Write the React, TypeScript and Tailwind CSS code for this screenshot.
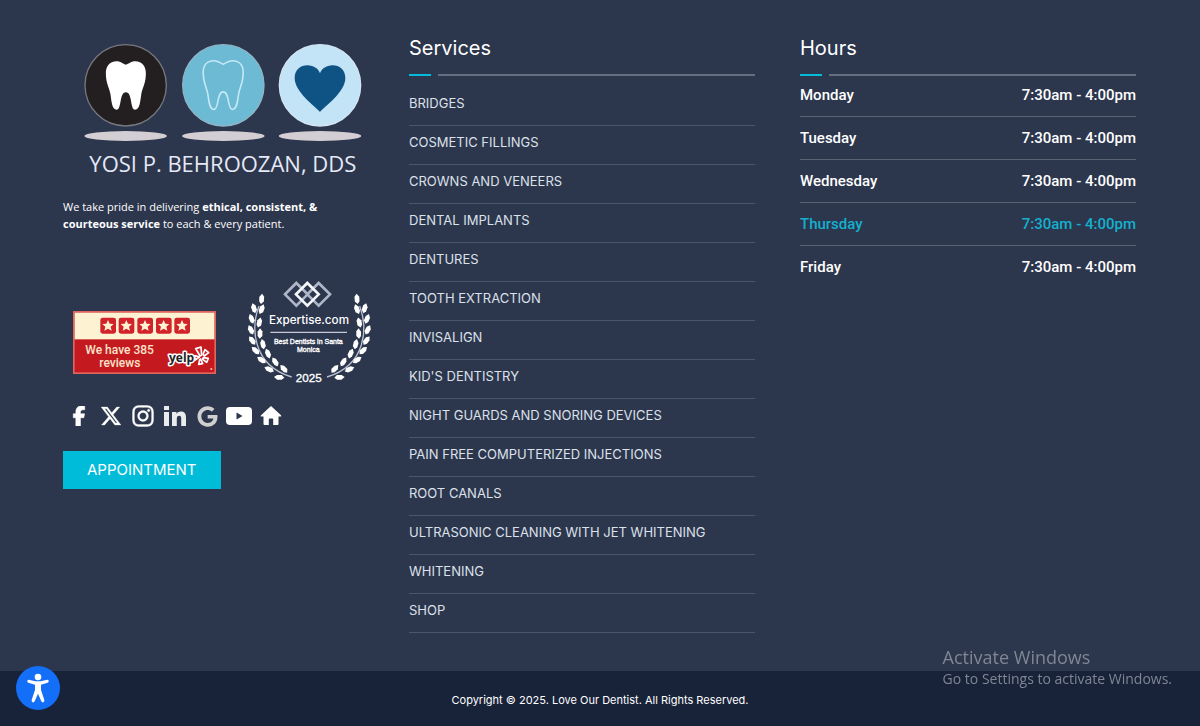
import type { ReactNode } from "react";
import { FaFacebookF, FaGoogle, FaInstagram, FaXTwitter } from "react-icons/fa6";

const services = [
  "Bridges",
  "Cosmetic Fillings",
  "Crowns and Veneers",
  "Dental Implants",
  "Dentures",
  "Tooth Extraction",
  "Invisalign",
  "Kid's Dentistry",
  "Night Guards and Snoring Devices",
  "Pain Free Computerized Injections",
  "Root Canals",
  "Ultrasonic Cleaning with Jet Whitening",
  "Whitening",
  "Shop",
];

const hours = [
  { day: "Monday", time: "7:30am - 4:00pm" },
  { day: "Tuesday", time: "7:30am - 4:00pm" },
  { day: "Wednesday", time: "7:30am - 4:00pm" },
  { day: "Thursday", time: "7:30am - 4:00pm", today: true },
  { day: "Friday", time: "7:30am - 4:00pm" },
];

const toothPath =
  "M22 0C30 0 34 5 40 7C46 5 50 0 58 0C72 0 79 10 79 24C79 44 72 54 70 66C68 80 67 97 58 97C48 97 53 62 40 62S32 97 22 97C13 97 12 80 10 66C8 54 1 44 1 24C1 10 8 0 22 0Z";

function Logo() {
  return (
    <svg viewBox="0 0 834 402" className="h-[134px] w-[278px]" role="img" aria-label="Yosi P. Behroozan, DDS">
      <circle cx="125" cy="127" r="122" fill="#231f20" stroke="#77777f" strokeWidth="4" />
      <circle cx="418" cy="127" r="122" fill="#6cbad3" stroke="#8fb6c8" strokeWidth="4" />
      <circle cx="708" cy="127" r="122" fill="#c3e4f6" stroke="#d5e6f3" strokeWidth="4" />
      <g fill="#d3ced4">
        <ellipse cx="125" cy="279" rx="124" ry="15" />
        <ellipse cx="418" cy="279" rx="124" ry="15" />
        <ellipse cx="708" cy="279" rx="124" ry="15" />
      </g>
      <path d={toothPath} transform="translate(64 55) scale(1.54 1.5)" fill="#fff" />
      <path d={toothPath} transform="translate(356 53) scale(1.54 1.51)" fill="none" stroke="#c6e9f6" strokeWidth="3" />
      <path
        d="M708 207C694 190 632 148 632 105C632 80 650 67 670 67C690 67 704 78 708 91C712 78 726 67 746 67C766 67 784 80 784 105C784 148 722 190 708 207Z"
        fill="#0f5384"
      />
      <text x="16" y="386" fontSize="66" fill="#e4e9f5" className="font-['Open_Sans',sans-serif]">
        YOSI P. BEHROOZAN, DDS
      </text>
    </svg>
  );
}

const stars = [104, 159, 215, 271, 326];

function YelpBadge() {
  return (
    <svg viewBox="0 0 429 189" className="h-[63px] w-[143px]" role="img" aria-label="We have 385 reviews on Yelp">
      <rect width="429" height="189" fill="#e0655f" />
      <rect x="5" y="5" width="419" height="179" fill="#c41a1f" />
      <rect x="5" y="5" width="419" height="80" fill="#fdf3d3" />
      {stars.map((x) => (
        <g key={x}>
          <rect x={x - 22} y="20" width="47" height="48" rx="7" fill="#d3232a" />
          <path
            d="M0-17L5-6L17-5L8 3L11 15L0 9L-11 15L-8 3L-17-5L-5-6Z"
            transform={`translate(${x + 1} 44)`}
            fill="#fdf3d3"
          />
        </g>
      ))}
      <text fill="#fbe3cb" fontSize="36" fontWeight="500" className="font-['Roboto',sans-serif]">
        <tspan x="37" y="128">We have 385</tspan>
        <tspan x="79" y="168">reviews</tspan>
      </text>
      <text
        x="288"
        y="154"
        fontSize="36"
        fontWeight="700"
        fill="#222"
        stroke="#fff"
        strokeWidth="9"
        strokeLinejoin="round"
        paintOrder="stroke"
        className="font-['Open_Sans',sans-serif]"
      >
        yelp
      </text>
      <g fill="#d3232a" stroke="#fff" strokeWidth="5" strokeLinejoin="round">
        <path d="M368 113L384 108L386 133L381 135Z" />
        <path d="M390 129L396 116L407 125L394 135Z" />
        <path d="M391 140L406 142L401 154L389 145Z" />
        <path d="M383 144L389 158L377 160L380 146Z" />
        <path d="M366 134L379 138L365 148Z" />
      </g>
      <circle cx="415" cy="174" r="3" fill="#f5c9b8" />
    </svg>
  );
}

// x, y, rotation of each leaf on the left branch
const leaves = [
  [80, 87, 12],
  [57, 115, -10],
  [50, 147, -14],
  [48, 180, -20],
  [52, 212, -30],
  [62, 242, -40],
  [80, 270, -50],
  [103, 298, -60],
  [133, 322, -80],
  [80, 118, 28],
  [73, 158, 20],
  [75, 191, 8],
  [84, 223, -6],
  [99, 251, -16],
  [121, 276, -26],
  [147, 297, -36],
];

function Branch() {
  return (
    <>
      <path d="M72 108C48 172 50 285 170 321" fill="none" stroke="#b9c1d0" strokeWidth="4" />
      {leaves.map(([x, y, angle]) => (
        <path
          key={`${x}-${y}`}
          d="M-2-16L6-8L8 6L1 15L-6 8L-8-5Z"
          transform={`translate(${x} ${y}) rotate(${angle})`}
          fill="#fff"
        />
      ))}
    </>
  );
}

function ExpertiseBadge() {
  return (
    <svg
      viewBox="30 30 384 318"
      className="h-[106px] w-32"
      role="img"
      aria-label="Expertise.com Best Dentists in Santa Monica 2025"
    >
      <Branch />
      <g transform="translate(446 0) scale(-1 1)">
        <Branch />
      </g>
      <g fill="none" strokeWidth="8">
        <path d="M184 39L218 73L184 107L150 73Z" stroke="#aeb7c8" />
        <path d="M251 39L285 73L251 107L217 73Z" stroke="#aeb7c8" />
        <path d="M217 39L251 73L217 107L183 73Z" stroke="#f4f6fa" />
      </g>
      <g fill="#fff" textAnchor="middle">
        <text x="222" y="163" fontSize="35" fontWeight="500" className="font-['Inter',sans-serif]">
          Expertise.com
        </text>
        <text x="220" y="221" fontSize="21" stroke="#fff" className="font-['Liberation_Sans',sans-serif]">
          Best Dentists in Santa
        </text>
        <text x="220" y="246" fontSize="21" stroke="#fff" className="font-['Liberation_Sans',sans-serif]">
          Monica
        </text>
        <text x="221" y="335" fontSize="35" stroke="#fff" className="font-['Liberation_Sans',sans-serif]">
          2025
        </text>
      </g>
      <path d="M106 187H336" stroke="#c4cad6" strokeWidth="4" />
    </svg>
  );
}

function LinkedInIcon() {
  return (
    <svg viewBox="0 0 22 22" className="size-[22px]" fill="#e9ebef">
      <path d="M0 1H5V5H0ZM0 7H5V21H0ZM8 7H12.500V9C13.500 7.300 15 6.600 17 6.600C20.800 6.600 22 9 22 12.500V21H17.200V13.500C17.200 11.700 16.700 10.700 15.200 10.700C13.500 10.700 12.800 11.900 12.800 13.700V21H8Z" />
    </svg>
  );
}

function YouTubeIcon() {
  return (
    <svg viewBox="0 0 26 20" className="h-5 w-[26px]">
      <rect x="0" y="1" width="26" height="18" rx="4" fill="#fff" />
      <path d="M10.500 6.500V13.500L16.500 10Z" fill="#2c364d" />
    </svg>
  );
}

function HomeIcon() {
  return (
    <svg viewBox="0 0 24 24" className="size-6" fill="currentColor">
      <path d="M12 2L22 11.200Q23 12.500 21.500 12.500H19.500V20Q19.500 21 18.500 21H14.200V15.500Q14.200 14.500 13.200 14.500H10.800Q9.800 14.500 9.800 15.500V21H5.500Q4.500 21 4.500 20V12.500H2.500Q1 12.500 2 11.200Z" />
    </svg>
  );
}

const socials = [
  { label: "Facebook", icon: <FaFacebookF className="size-5" stroke="currentColor" strokeWidth="16" /> },
  { label: "X", icon: <FaXTwitter className="size-[22px]" stroke="currentColor" strokeWidth="8" /> },
  { label: "Instagram", icon: <FaInstagram className="size-6" stroke="currentColor" strokeWidth="8" /> },
  { label: "LinkedIn", icon: <LinkedInIcon /> },
  { label: "Google", icon: <FaGoogle className="size-[21px] text-[#cfcfcf]" /> },
  { label: "YouTube", icon: <YouTubeIcon /> },
  { label: "Home", icon: <HomeIcon /> },
];

function ColumnTitle({ children }: { children: ReactNode }) {
  return (
    <>
      <h2 className="text-xl leading-6 text-white">{children}</h2>
      <div className="mt-3.5 flex gap-[7px]">
        <span className="h-0.5 w-[22px] bg-[#00bcd9]" />
        <span className="h-0.5 flex-1 bg-[#646e80]" />
      </div>
    </>
  );
}

export default function App() {
  return (
    <div className="flex min-h-screen flex-col bg-[#2c364d] font-['Inter',sans-serif] text-white">
      <main className="grid flex-1 gap-x-10 gap-y-10 pt-9 pr-16 pb-[38px] pl-[63px] md:grid-cols-[minmax(0,306fr)_346fr_341fr]">
        <section className="pt-[7px]">
          <div className="pl-[21px]">
            <Logo />
          </div>
          <p className="mt-[21px] font-['Open_Sans',sans-serif] text-[11px] leading-[17px] font-medium">
            We take pride in delivering <strong>ethical, consistent, &amp;</strong>
            <br />
            <strong>courteous service</strong> to each &amp; every patient.
          </p>
          <div className="mt-12 flex items-end gap-[29px] pl-2.5">
            <a href="#yelp" className="mb-3 shrink-0">
              <YelpBadge />
            </a>
            <a href="#expertise" className="shrink-0">
              <ExpertiseBadge />
            </a>
          </div>
          <nav className="mt-[18px] flex" aria-label="Social">
            {socials.map(({ label, icon }) => (
              <a key={label} href={`#${label}`} aria-label={label} className="flex h-6 w-8 items-center justify-center">
                {icon}
              </a>
            ))}
          </nav>
          <button className="mt-[23px] h-[38px] bg-[#00bcd9] px-6 text-[15px]">APPOINTMENT</button>
        </section>

        <section>
          <ColumnTitle>Services</ColumnTitle>
          <ul className="mt-[11px]">
            {services.map((name) => (
              <li key={name} className="border-b border-[#4b566a] pt-1.5 pb-3 text-[13px] leading-5">
                <a href="#services" className="block uppercase text-[#dde1ea]">
                  {name}
                </a>
              </li>
            ))}
          </ul>
        </section>

        <section className="pl-[5px]">
          <ColumnTitle>Hours</ColumnTitle>
          <table className="-mt-0.5 w-full border-separate border-spacing-0 font-['Roboto',sans-serif] text-[15px] leading-6 font-medium">
            <tbody>
              {hours.map(({ day, time, today }) => (
                <tr key={day} className={today ? "group text-[#14b0cd]" : "group"}>
                  <th scope="row" className="border-b border-[#5a6475] py-[9px] text-left font-medium group-last:border-0">
                    {day}
                  </th>
                  <td className="border-b border-[#5a6475] py-[9px] text-right group-last:border-0">{time}</td>
                </tr>
              ))}
            </tbody>
          </table>
        </section>
      </main>

      <footer className="bg-[#182238] pt-[21px] pb-[19px] text-center text-[11px] leading-4">
        Copyright © 2025. Love Our Dentist. All Rights Reserved.
      </footer>

      <button
        aria-label="Accessibility options"
        className="fixed bottom-4 left-4 flex size-11 items-center justify-center rounded-full bg-[#146ff8]"
      >
        <svg viewBox="0 0 66 90" className="h-[30px] w-[22px]" fill="#fff">
          <circle cx="33" cy="12" r="10" />
          <path d="M5 20Q2 20 1 23Q0 27 4 29L24 35V51L14 81Q13 86 17 88Q21 89 23 85L33 62L43 85Q45 89 49 88Q53 86 52 81L42 51V35L62 29Q66 27 65 23Q64 20 61 20L41 25H25Z" />
        </svg>
      </button>

      <div className="pointer-events-none fixed right-7 bottom-[37px] font-['Open_Sans',sans-serif] text-[#7f8694]">
        <p className="text-lg leading-6">Activate Windows</p>
        <p className="text-sm leading-5">Go to Settings to activate Windows.</p>
      </div>
    </div>
  );
}
